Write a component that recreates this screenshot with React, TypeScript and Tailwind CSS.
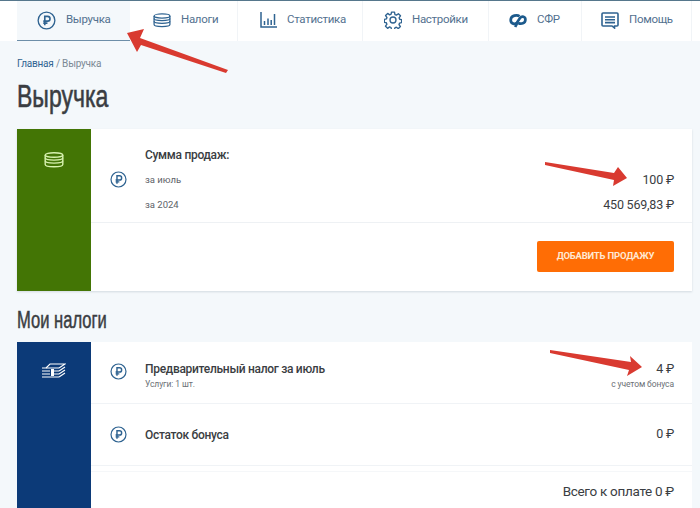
import React from "react";

const blue = "#2f6391";

function RubleIcon({ size = 18 }: { size?: number }) {
  return (
    <svg width={size} height={size} viewBox="0 0 20 20" fill="none" stroke={blue} strokeWidth="1.400" className="shrink-0">
      <circle cx="10" cy="10" r="8.800" />
      <path d="M8.200 15V5.600h3a2.500 2.500 0 0 1 0 5H6.600M6.600 12.800h4.400" strokeWidth="1.700" />
    </svg>
  );
}

function CoinsIcon({ color = blue, w = 18, h = 15 }: { color?: string; w?: number; h?: number }) {
  return (
    <svg width={w} height={h} viewBox="0 0 20 16" fill="none" stroke={color} strokeWidth="1.400" className="shrink-0">
      <ellipse cx="10" cy="3" rx="8.800" ry="2.300" />
      <path d="M1.200 3v2.800c0 1.300 3.900 2.300 8.800 2.300s8.800-1 8.800-2.300V3" />
      <path d="M1.200 5.800v3c0 1.300 3.900 2.300 8.800 2.300s8.800-1 8.800-2.300v-3" />
      <path d="M1.200 8.800v3.600c0 1.300 3.900 2.300 8.800 2.300s8.800-1 8.800-2.300V8.800" />
    </svg>
  );
}

function StatsIcon() {
  return (
    <svg width="17" height="16" viewBox="0 0 17 16" fill="none" stroke={blue} strokeWidth="1.500" className="shrink-0">
      <path d="M1 0v15h16" />
      <path d="M4.500 13V9M8 13V6.500M11.200 13V8M14.500 13V2" />
    </svg>
  );
}

function GearIcon() {
  return (
    <svg width="18" height="18" viewBox="0 0 24 24" fill="none" stroke={blue} strokeWidth="1.800" strokeLinejoin="round" className="shrink-0">
      <path d="M10 1.500h4l.6 3.200 1.900.8 2.700-1.900 2.800 2.800-1.900 2.700.8 1.900 2.600.5v4l-2.700.6-.8 1.900 1.900 2.700-2.800 2.800-2.700-1.900-1.900.8-.5 2.800h-4l-.6-3.200-1.900-.8-2.700 1.900-2.800-2.800 1.900-2.700-.8-1.900-2.600-.5v-4l2.700-.6.8-1.900-1.900-2.700 2.800-2.800 2.700 1.900 1.900-.8z" />
      <circle cx="12" cy="12" r="4" />
    </svg>
  );
}

function SfrIcon() {
  return (
    <svg width="18" height="15" viewBox="0 0 18 15" fill="none" stroke="#1c5a8c" strokeWidth="2.700" className="shrink-0">
      <path d="M10.500 3.300C8.500 1.600 1.800 2 1.700 7c0 4 4.500 4.800 6.300 2.500l3-4.500C13 2.500 16.500 3.500 16.400 6.800c0 3.600-4.400 4.700-7 3.200" />
      <path d="M8.500 9.500 6.200 14" />
    </svg>
  );
}

function HelpIcon() {
  return (
    <svg width="18" height="17" viewBox="0 0 18 17" fill="none" stroke={blue} strokeWidth="1.600" className="shrink-0">
      <path d="M2 1h14a1 1 0 0 1 1 1v11a1 1 0 0 1-1 1h-2.500v2L11 14H2a1 1 0 0 1-1-1V2a1 1 0 0 1 1-1z" />
      <path d="M4 5h10M4 7.800h10M4 10.600h10" />
    </svg>
  );
}

function MoneyIcon() {
  return (
    <svg width="24" height="15" viewBox="0 0 24 15" fill="none" stroke="#ffffff" strokeWidth="1.100" className="shrink-0">
      <path d="M0 5h17M0 8h8M0 11h8M0 14h17M12 8h5M12 11h5" />
      <rect x="9" y="6" width="3" height="7" fill="#ffffff" stroke="none" />
      <path d="M4 5 8 1h15l-6 4M17 8l6-4M17 11l6-4M17 14l6-4" />
    </svg>
  );
}

function Arrow({ points }: { points: string }) {
  return (
    <svg className="absolute left-0 top-0" viewBox="0 0 700 508" width="700" height="508">
      <polygon points={points} fill="#d93a30" />
    </svg>
  );
}

const tabs = [
  { label: "Налоги", icon: <CoinsIcon />, cls: "w-[108px] pl-[23px]" },
  { label: "Статистика", icon: <StatsIcon />, cls: "w-[125px] pl-[22px]" },
  { label: "Настройки", icon: <GearIcon />, cls: "w-[126px] pl-[21px]" },
  { label: "СФР", icon: <SfrIcon />, cls: "w-[93px] pl-[20px]" },
  { label: "Помощь", icon: <HelpIcon />, cls: "w-[110px] pl-[19px]" },
];

function Tab({ label, icon, cls }: { label: string; icon: React.ReactNode; cls: string }) {
  return (
    <div className={"flex items-center gap-[10px] border-r border-[#f1f4f7] pb-[2px] text-[#53718f] " + cls}>
      {icon}
      <span>{label}</span>
    </div>
  );
}

const narrow = { fontFamily: '"Liberation Sans", sans-serif' };

export default function App() {
  return (
    <div
      className="relative h-[508px] w-[700px] overflow-hidden bg-[#f4f8fb] text-[#3a3d42]"
      style={{ fontFamily: 'Roboto, "Noto Sans", sans-serif' }}
    >
      <nav className="flex h-[41px] border-t border-[#56778c] bg-white pl-[17px] text-[11.500px] tracking-[-0.3px]">
        <div className="flex w-[113px] items-center gap-[10px] border-b border-[#6d8ea8] bg-[#f4f8fb] pb-[1px] pl-[20px] text-[#53718f]">
          <RubleIcon size={19} />
          <span>Выручка</span>
        </div>
        {tabs.map((t) => (
          <Tab key={t.label} {...t} />
        ))}
      </nav>

      <div className="pl-[17px]">
        <div className="pt-[17px] text-[10px] leading-[12px] tracking-[-0.2px]">
          <span className="text-[#2f6391]">Главная</span>
          <span className="text-[#7b8894]"> / Выручка</span>
        </div>
        <h1 className="mt-[9px] origin-left scale-x-[0.72] text-[32px] font-normal leading-[35px] text-[#3a3d42] [-webkit-text-stroke:0.6px_#3a3d42]" style={narrow}>
          Выручка
        </h1>

        <section className="mt-[15px] flex h-[162px] w-[675px] bg-white shadow-[0_1px_2px_rgba(80,100,120,0.2)]">
          <div className="flex w-[74px] shrink-0 justify-center bg-[#437505] pt-[23px]">
            <CoinsIcon color="#d8f2b0" w={20} h={16} />
          </div>
          <div className="flex min-w-0 flex-1 flex-col">
            <div className="flex h-[94px] items-center border-b border-[#eef1f4] pl-[19px] pr-[18px] pt-[8px]">
              <RubleIcon size={17} />
              <div className="ml-[18px] flex-1">
                <div className="text-[12px] font-medium leading-[16px] tracking-[-0.3px]">Сумма продаж:</div>
                <div className="mt-[10px] text-[9.500px] leading-[14px] text-[#5d6268]">за июль</div>
                <div className="mt-[11px] text-[9.500px] leading-[14px] text-[#5d6268]">за 2024</div>
              </div>
              <div className="pt-[26px] text-right text-[12.500px] tracking-[-0.2px]">
                <div className="leading-[16px]">100 ₽</div>
                <div className="mt-[9px] leading-[16px]">450 569,83 ₽</div>
              </div>
            </div>
            <div className="flex flex-1 items-start justify-end pr-[18px] pt-[18px]">
              <button className="h-[31px] w-[137px] rounded-[2px] bg-[#ff6d05] text-[9.500px] font-bold tracking-[-0.2px] text-[#ffe8d2]">
                ДОБАВИТЬ ПРОДАЖУ
              </button>
            </div>
          </div>
        </section>

        <h2 className="mt-[15px] origin-left scale-x-[0.72] text-[23px] font-normal leading-[28px] [-webkit-text-stroke:0.5px_#3a3d42]" style={narrow}>
          Мои налоги
        </h2>

        <section className="mt-[8px] flex h-[170px] w-[675px] bg-white">
          <div className="flex w-[74px] shrink-0 justify-center bg-[#0c3a78] pt-[21px]">
            <MoneyIcon />
          </div>
          <div className="flex min-w-0 flex-1 flex-col">
            <div className="flex h-[62px] items-center border-b border-[#f0f3f6] pl-[19px] pr-[18px] pt-[5px]">
              <div className="mb-[8px] shrink-0">
                <RubleIcon size={17} />
              </div>
              <div className="ml-[18px] flex-1">
                <div className="text-[12px] font-medium leading-[16px] tracking-[-0.3px]">Предварительный налог за июль</div>
                <div className="mt-[1px] text-[8.500px] leading-[12px] tracking-[-0.1px] text-[#6b7076]">Услуги: 1 шт.</div>
              </div>
              <div className="text-right">
                <div className="text-[12.500px] leading-[16px] tracking-[-0.2px]">4 ₽</div>
                <div className="mt-[1px] text-[8.500px] leading-[12px] tracking-[-0.1px] text-[#6b7076]">с учетом бонуса</div>
              </div>
            </div>
            <div className="flex h-[62px] items-center border-b border-[#f0f3f6] pl-[19px] pr-[18px]">
              <RubleIcon size={17} />
              <div className="ml-[18px] flex-1 text-[12px] font-medium tracking-[-0.3px]">Остаток бонуса</div>
              <div className="text-[12.500px] tracking-[-0.2px]">0 ₽</div>
            </div>
            <div className="mt-[5px] flex justify-end border-t border-[#f5f7f9] pr-[18px] pt-[10px] text-[13.500px] leading-[18px] tracking-[-0.3px]">
              Всего к оплате 0 ₽
            </div>
          </div>
        </section>
      </div>

      <Arrow points="228,70 140,38 144,29 127,33 137,52 141,45 226,73" />
      <Arrow points="545,162 614,173 618,167 627,178 613,186 614,180 545,165" />
      <Arrow points="550,350 631,362 630,356 642,367 627,376 629,370 550,353" />
    </div>
  );
}
